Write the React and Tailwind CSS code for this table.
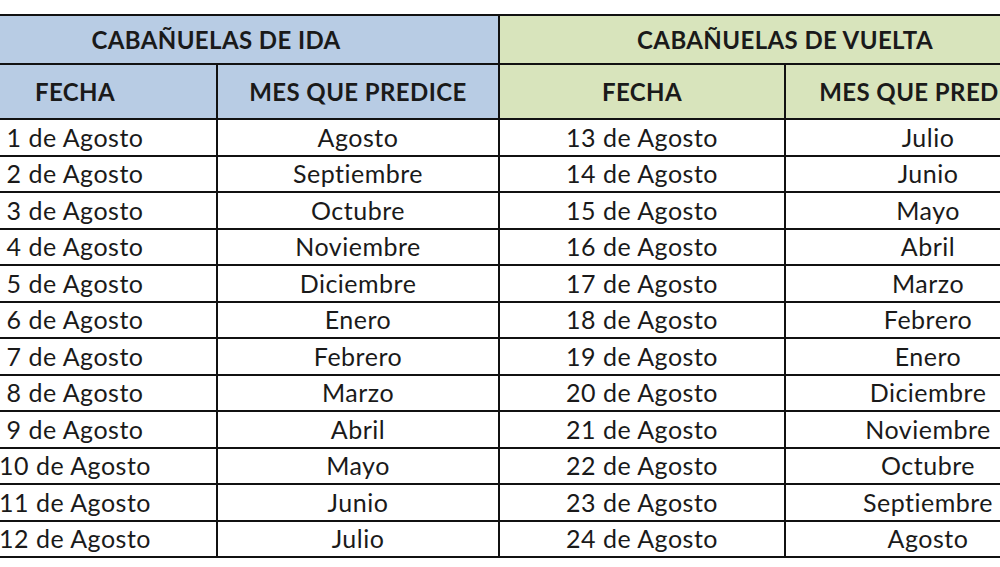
import React from "react";

const ida = [
  ["1 de Agosto", "Agosto"],
  ["2 de Agosto", "Septiembre"],
  ["3 de Agosto", "Octubre"],
  ["4 de Agosto", "Noviembre"],
  ["5 de Agosto", "Diciembre"],
  ["6 de Agosto", "Enero"],
  ["7 de Agosto", "Febrero"],
  ["8 de Agosto", "Marzo"],
  ["9 de Agosto", "Abril"],
  ["10 de Agosto", "Mayo"],
  ["11 de Agosto", "Junio"],
  ["12 de Agosto", "Julio"],
];

const vuelta = [
  ["13 de Agosto", "Julio"],
  ["14 de Agosto", "Junio"],
  ["15 de Agosto", "Mayo"],
  ["16 de Agosto", "Abril"],
  ["17 de Agosto", "Marzo"],
  ["18 de Agosto", "Febrero"],
  ["19 de Agosto", "Enero"],
  ["20 de Agosto", "Diciembre"],
  ["21 de Agosto", "Noviembre"],
  ["22 de Agosto", "Octubre"],
  ["23 de Agosto", "Septiembre"],
  ["24 de Agosto", "Agosto"],
];

export default function App() {
  const cell = "border-2 border-[#111] text-center p-0 leading-none whitespace-nowrap";
  const head = "text-[24px] tracking-[0.4px]";
  return (
    <div
      className="w-[1000px] h-[567px] overflow-hidden bg-white pt-[14px]"
      style={{ fontFamily: "Lato, 'Open Sans', sans-serif" }}
    >
      <table className="ml-[-68px] w-[1138px] border-collapse table-fixed text-[25px] tracking-[0.5px] text-[#1a1a1a]">
        <colgroup>
          <col className="w-[284px]" />
          <col className="w-[282px]" />
          <col className="w-[286px]" />
          <col className="w-[286px]" />
        </colgroup>
        <thead>
          <tr className="h-[49px] font-bold">
            <th colSpan={2} className={`${cell} ${head} bg-[#b8cce4]`}>
              CABAÑUELAS DE IDA
            </th>
            <th colSpan={2} className={`${cell} ${head} bg-[#d8e4bc]`}>
              CABAÑUELAS DE VUELTA
            </th>
          </tr>
          <tr className="h-[55px] font-bold">
            <th className={`${cell} ${head} bg-[#b8cce4]`}>FECHA</th>
            <th className={`${cell} ${head} bg-[#b8cce4]`}>MES QUE PREDICE</th>
            <th className={`${cell} ${head} bg-[#d8e4bc]`}>FECHA</th>
            <th className={`${cell} ${head} bg-[#d8e4bc]`}>MES QUE PREDICE</th>
          </tr>
        </thead>
        <tbody>
          {ida.map((row, i) => (
            <tr key={i} className="h-[36.5px]">
              <td className={cell}>{row[0]}</td>
              <td className={cell}>{row[1]}</td>
              <td className={cell}>{vuelta[i][0]}</td>
              <td className={cell}>{vuelta[i][1]}</td>
            </tr>
          ))}
        </tbody>
      </table>
    </div>
  );
}
